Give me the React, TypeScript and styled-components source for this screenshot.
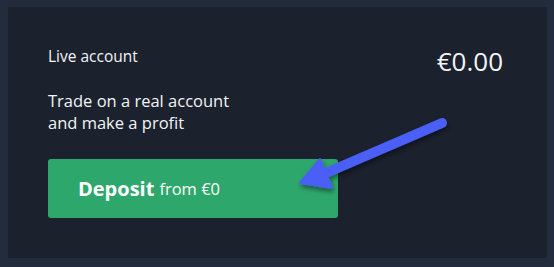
import React from "react";
import styled, { createGlobalStyle } from "styled-components";

const Global = createGlobalStyle`
  html, body { margin: 0; padding: 0; background: #232c3c; }
  body { font-family: "Open Sans", "Liberation Sans", sans-serif; }
`;

const Frame = styled.div`
  width: 554px;
  height: 267px;
  box-sizing: border-box;
  padding: 7px 7px 9px 8px;
  background: #232c3c;
`;

const Panel = styled.div`
  position: relative;
  height: 100%;
  box-sizing: border-box;
  background: #1b212d;
  padding: 39px 44px 0 40px;
  display: flex;
  flex-direction: column;
  color: #f2f4f7;
`;

const TopRow = styled.div`
  display: flex;
  justify-content: space-between;
  align-items: flex-start;
`;

const Label = styled.div`
  font-size: 15.5px;
  line-height: 20px;
`;

const Balance = styled.div`
  font-size: 26px;
  line-height: 32px;
  margin-top: -1px;
`;

const Pitch = styled.div`
  font-size: 16.5px;
  line-height: 22px;
  margin-top: 13px;
`;

const DepositButton = styled.button`
  margin-top: 25px;
  width: 290px;
  height: 59px;
  border: none;
  border-radius: 3px;
  background: #2ea76c;
  color: #fff;
  font-family: inherit;
  display: flex;
  align-items: center;
  padding: 0 0 0 30px;
  gap: 5px;
  cursor: pointer;
`;

const Strong = styled.span`
  font-size: 20px;
  font-weight: 700;
`;

const Soft = styled.span`
  font-size: 16.5px;
  font-weight: 400;
`;

const Arrow = styled.svg`
  position: absolute;
  left: 0;
  top: 0;
  overflow: visible;
  pointer-events: none;
`;

export default function App() {
  return (
    <>
      <Global />
      <Frame>
        <Panel>
          <TopRow>
            <Label>Live account</Label>
            <Balance>€0.00</Balance>
          </TopRow>
          <Pitch>
            Trade on a real account
            <br />
            and make a profit
          </Pitch>
          <DepositButton>
            <Strong>Deposit</Strong>
            <Soft>from €0</Soft>
          </DepositButton>
          <Arrow width="539" height="251" viewBox="0 0 539 251">
            <defs>
              <filter id="sh" x="-20%" y="-50%" width="140%" height="200%">
                <feDropShadow dx="1" dy="3" stdDeviation="2.5" floodColor="#000" floodOpacity="0.45" />
              </filter>
            </defs>
            <g filter="url(#sh)" fill="#4a5ef6" stroke="#4a5ef6">
              <line x1="434" y1="116" x2="318" y2="166" strokeWidth="10" strokeLinecap="round" />
              <polygon points="292,176 312,152 324,181" strokeWidth="2" strokeLinejoin="round" />
            </g>
          </Arrow>
        </Panel>
      </Frame>
    </>
  );
}
